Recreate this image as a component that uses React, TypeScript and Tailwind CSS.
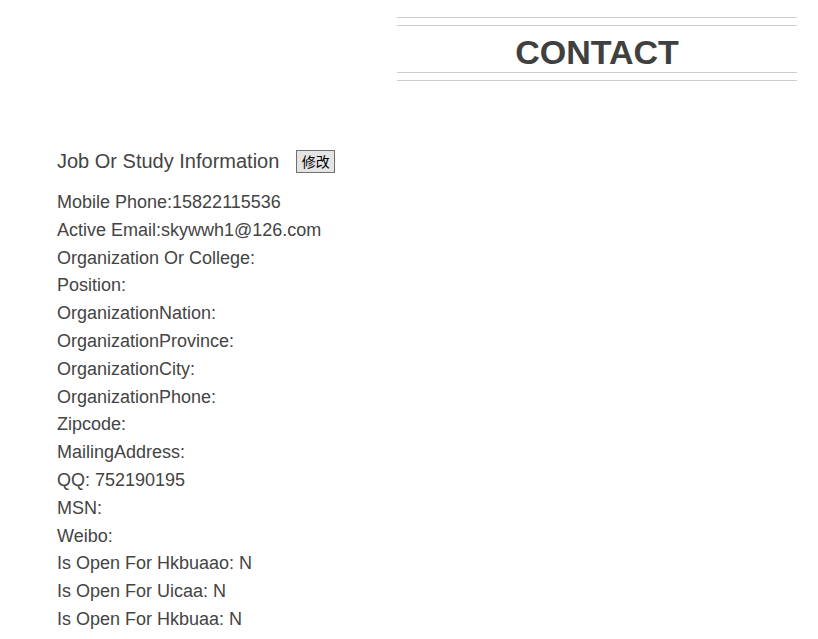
const FIELDS = [
  'Mobile Phone:15822115536',
  'Active Email:skywwh1@126.com',
  'Organization Or College:',
  'Position:',
  'OrganizationNation:',
  'OrganizationProvince:',
  'OrganizationCity:',
  'OrganizationPhone:',
  'Zipcode:',
  'MailingAddress:',
  'QQ: 752190195',
  'MSN:',
  'Weibo:',
  'Is Open For Hkbuaao: N',
  'Is Open For Uicaa: N',
  'Is Open For Hkbuaa: N',
]

export default function App() {
  return (
    <div className="min-h-[639px] bg-white text-[#444] font-['Liberation_Sans',Arial,sans-serif]">
      <div className="ml-[397px] w-[400px] pt-[17px]">
        <div className="border-t border-[#ccc]" />
        <div className="mt-[7px] border-t border-[#ccc]" />
        <h1 className="h-[46px] pt-[3px] text-center text-[34px] font-bold leading-[46px] text-[#404040]">CONTACT</h1>
        <div className="border-t border-[#ccc]" />
        <div className="mt-[7px] border-t border-[#ccc]" />
      </div>

      <div className="pl-[57px] pt-[66px]">
        <div className="flex items-center gap-[17px]">
          <h2 className="text-[20px] leading-[28px]">Job Or Study Information</h2>
          <button className="h-[23px] w-[39px] border border-[#707070] bg-[#e4e4e4] text-[14px] leading-none text-black font-['Noto_Sans_CJK_SC',sans-serif]">
            修改
          </button>
        </div>
        <div className="mt-[14px] flex flex-col text-[18px] leading-[27.8px]">
          {FIELDS.map(f => (
            <p key={f}>{f}</p>
          ))}
        </div>
      </div>
    </div>
  )
}
